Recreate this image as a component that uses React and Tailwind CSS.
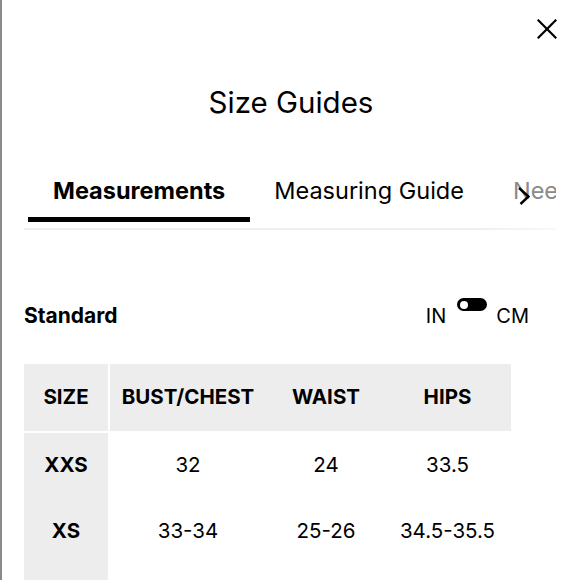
import React, { useState } from 'react';

const rows = [
    { size: 'XXS', bust: '32', waist: '24', hips: '33.5' },
    { size: 'XS', bust: '33-34', waist: '25-26', hips: '34.5-35.5' },
    { size: 'S', bust: '35-36', waist: '27-28', hips: '36.5-37.5' },
];

const tabs = ['Measurements', 'Measuring Guide', 'Need Help?'];

const App = () => {
    const [active, setActive] = useState(0);
    const [metric, setMetric] = useState(false);

    return (
        <div
            className="min-h-[580px] w-[580px] bg-white border-l-2 border-[#8a8a8a] text-black"
            style={{ fontFamily: 'Inter, "Noto Sans", sans-serif' }}
        >
            {/* Close */}
            <div className="flex justify-end pt-[19px] pr-[23px]">
                <button aria-label="Close">
                    <svg width="20" height="20" viewBox="0 0 20 20" fill="none" stroke="#000" strokeWidth="2.2" strokeLinecap="square">
                        <line x1="1.5" y1="1.5" x2="18.5" y2="18.5" />
                        <line x1="18.5" y1="1.5" x2="1.5" y2="18.5" />
                    </svg>
                </button>
            </div>

            {/* Title */}
            <h1 className="mt-[46px] text-center text-[29.5px] leading-[34px] font-normal">Size Guides</h1>

            {/* Tabs */}
            <div className="mt-[58px] pl-[22px] pr-6">
                <div className="relative overflow-hidden">
                    <div className="flex pl-1 whitespace-nowrap">
                        {tabs.map((t, i) => (
                            <button
                                key={t}
                                onClick={() => setActive(i)}
                                className={
                                    i === active
                                        ? 'px-[25px] pb-[12px] text-[23.5px] leading-[28px] font-bold border-b-[5px] border-black'
                                        : i === 2
                                        ? 'px-[25px] pb-[12px] text-[23.5px] leading-[28px] font-normal text-[#8a8a8a] border-b-[5px] border-transparent'
                                        : 'px-[24px] pb-[12px] text-[23.5px] leading-[28px] font-normal border-b-[5px] border-transparent'
                                }
                            >
                                {t}
                            </button>
                        ))}
                    </div>
                    <div className="absolute left-[494px] top-[10px]">
                        <svg width="12" height="18" viewBox="0 0 12 18" fill="none" stroke="#000" strokeWidth="2.4">
                            <polyline points="1,1 10.5,9.5 2.5,17" />
                        </svg>
                    </div>
                </div>
                <div className="mt-[6px] h-[2px] bg-gradient-to-r from-[#efefef] via-[#efefef] via-85% to-[#f8f8f8]" />
            </div>

            {/* Standard / unit toggle */}
            <div className="mt-[74px] flex items-center justify-between pl-[22px] pr-[51px]">
                <span className="text-[21px] leading-[24px] font-bold">Standard</span>
                <div className="flex items-start text-[20px] leading-[24px]">
                    <span>IN</span>
                    <button
                        onClick={() => setMetric(!metric)}
                        className={
                            metric
                                ? 'ml-[11px] mr-[9px] -mt-[6px] w-[30px] h-[13px] rounded-full bg-black flex items-center justify-end px-[3px]'
                                : 'ml-[11px] mr-[9px] -mt-[6px] w-[30px] h-[13px] rounded-full bg-black flex items-center px-[3px]'
                        }
                    >
                        <span className="block w-[8px] h-[8px] rounded-full bg-white" />
                    </button>
                    <span>CM</span>
                </div>
            </div>

            {/* Table */}
            <div className="mt-[36px] pl-[22px] text-[20.5px]">
                <div className="flex h-[67px] font-bold">
                    <div className="w-[84px] bg-[#ededed] flex items-center justify-center">SIZE</div>
                    <div className="ml-[2px] flex bg-[#ededed]">
                        <div className="w-[156px] flex items-center justify-center">BUST/CHEST</div>
                        <div className="w-[118px] pl-[2px] flex items-center justify-center">WAIST</div>
                        <div className="w-[127px] flex items-center justify-center">HIPS</div>
                    </div>
                </div>
                <div className="mt-[2px]">
                    {rows.map((r) => (
                        <div key={r.size} className="flex h-[66px]">
                            <div className="w-[84px] bg-[#ededed] flex items-center justify-center pb-[2px] font-bold">{r.size}</div>
                            <div className="ml-[2px] flex">
                                <div className="w-[156px] flex items-center justify-center pb-[2px]">{r.bust}</div>
                                <div className="w-[118px] pl-[2px] flex items-center justify-center pb-[2px]">{r.waist}</div>
                                <div className="w-[127px] flex items-center justify-center pb-[2px]">{r.hips}</div>
                            </div>
                        </div>
                    ))}
                </div>
            </div>
        </div>
    );
};

export default App;
